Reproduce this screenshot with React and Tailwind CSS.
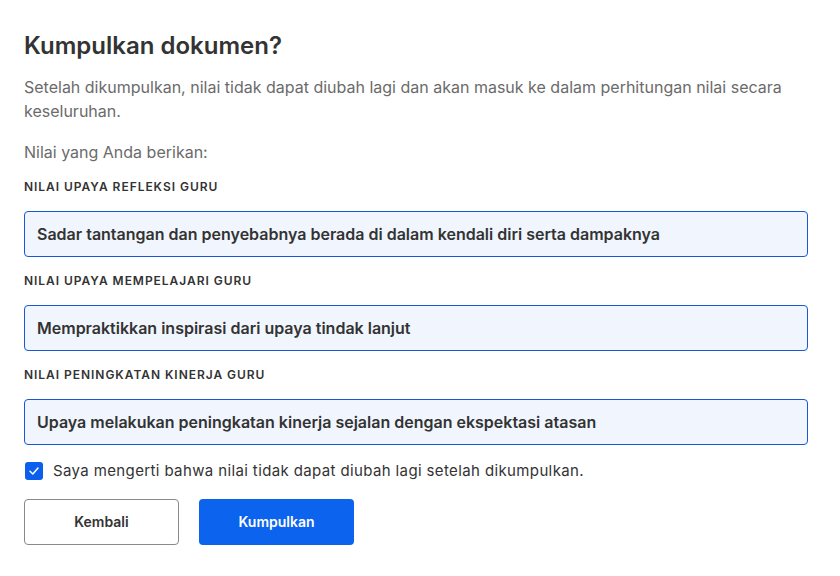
export default function App() {
  const fields = [
    ["NILAI UPAYA REFLEKSI GURU", "Sadar tantangan dan penyebabnya berada di dalam kendali diri serta dampaknya"],
    ["NILAI UPAYA MEMPELAJARI GURU", "Mempraktikkan inspirasi dari upaya tindak lanjut"],
    ["NILAI PENINGKATAN KINERJA GURU", "Upaya melakukan peningkatan kinerja sejalan dengan ekspektasi atasan"],
  ];

  return (
    <div className="min-h-screen bg-white px-6 pt-[30px] font-[Inter] text-[#333]">
      <h1 className="text-2xl leading-8 font-semibold text-[#333]">Kumpulkan dokumen?</h1>
      <p className="mt-[13px] text-base leading-6 text-[#6b6b6b] pr-6">
        Setelah dikumpulkan, nilai tidak dapat diubah lagi dan akan masuk ke dalam perhitungan nilai secara keseluruhan.
      </p>
      <p className="mt-[17px] text-base leading-6 text-[#6b6b6b]">Nilai yang Anda berikan:</p>

      <div className="mt-[15px] flex flex-col gap-4 pr-2">
        {fields.map(([label, value]) => (
          <div key={label} className="flex flex-col gap-4">
            <div className="text-xs leading-4 font-semibold tracking-[0.08em] text-[#333]">{label}</div>
            <div className="h-[46px] flex items-center rounded-[4px] border border-[#1a56d6] bg-[#f1f6fe] px-3 text-base font-semibold text-[#333]">
              {value}
            </div>
          </div>
        ))}
      </div>

      <label className="mt-4 flex items-center gap-[10px] text-[15px] leading-5 tracking-[0.025em] text-[#333]">
        <span className="w-[18px] h-[18px] ml-px rounded-[3px] bg-[#0b5fec] flex items-center justify-center">
          <svg width="12" height="12" viewBox="0 0 12 12" fill="none">
            <path d="M2 6.2 4.8 9 10 3" stroke="white" strokeWidth="1.5" strokeLinecap="round" strokeLinejoin="round" />
          </svg>
        </span>
        Saya mengerti bahwa nilai tidak dapat diubah lagi setelah dikumpulkan.
      </label>

      <div className="mt-[18px] flex gap-5">
        <button className="w-[155px] h-[46px] rounded-[4px] border border-[#8a8a8a] bg-white text-sm font-semibold text-[#333]">
          Kembali
        </button>
        <button className="w-[155px] h-[46px] rounded-[4px] bg-[#0b63ee] text-sm font-semibold text-white">
          Kumpulkan
        </button>
      </div>
    </div>
  );
}
